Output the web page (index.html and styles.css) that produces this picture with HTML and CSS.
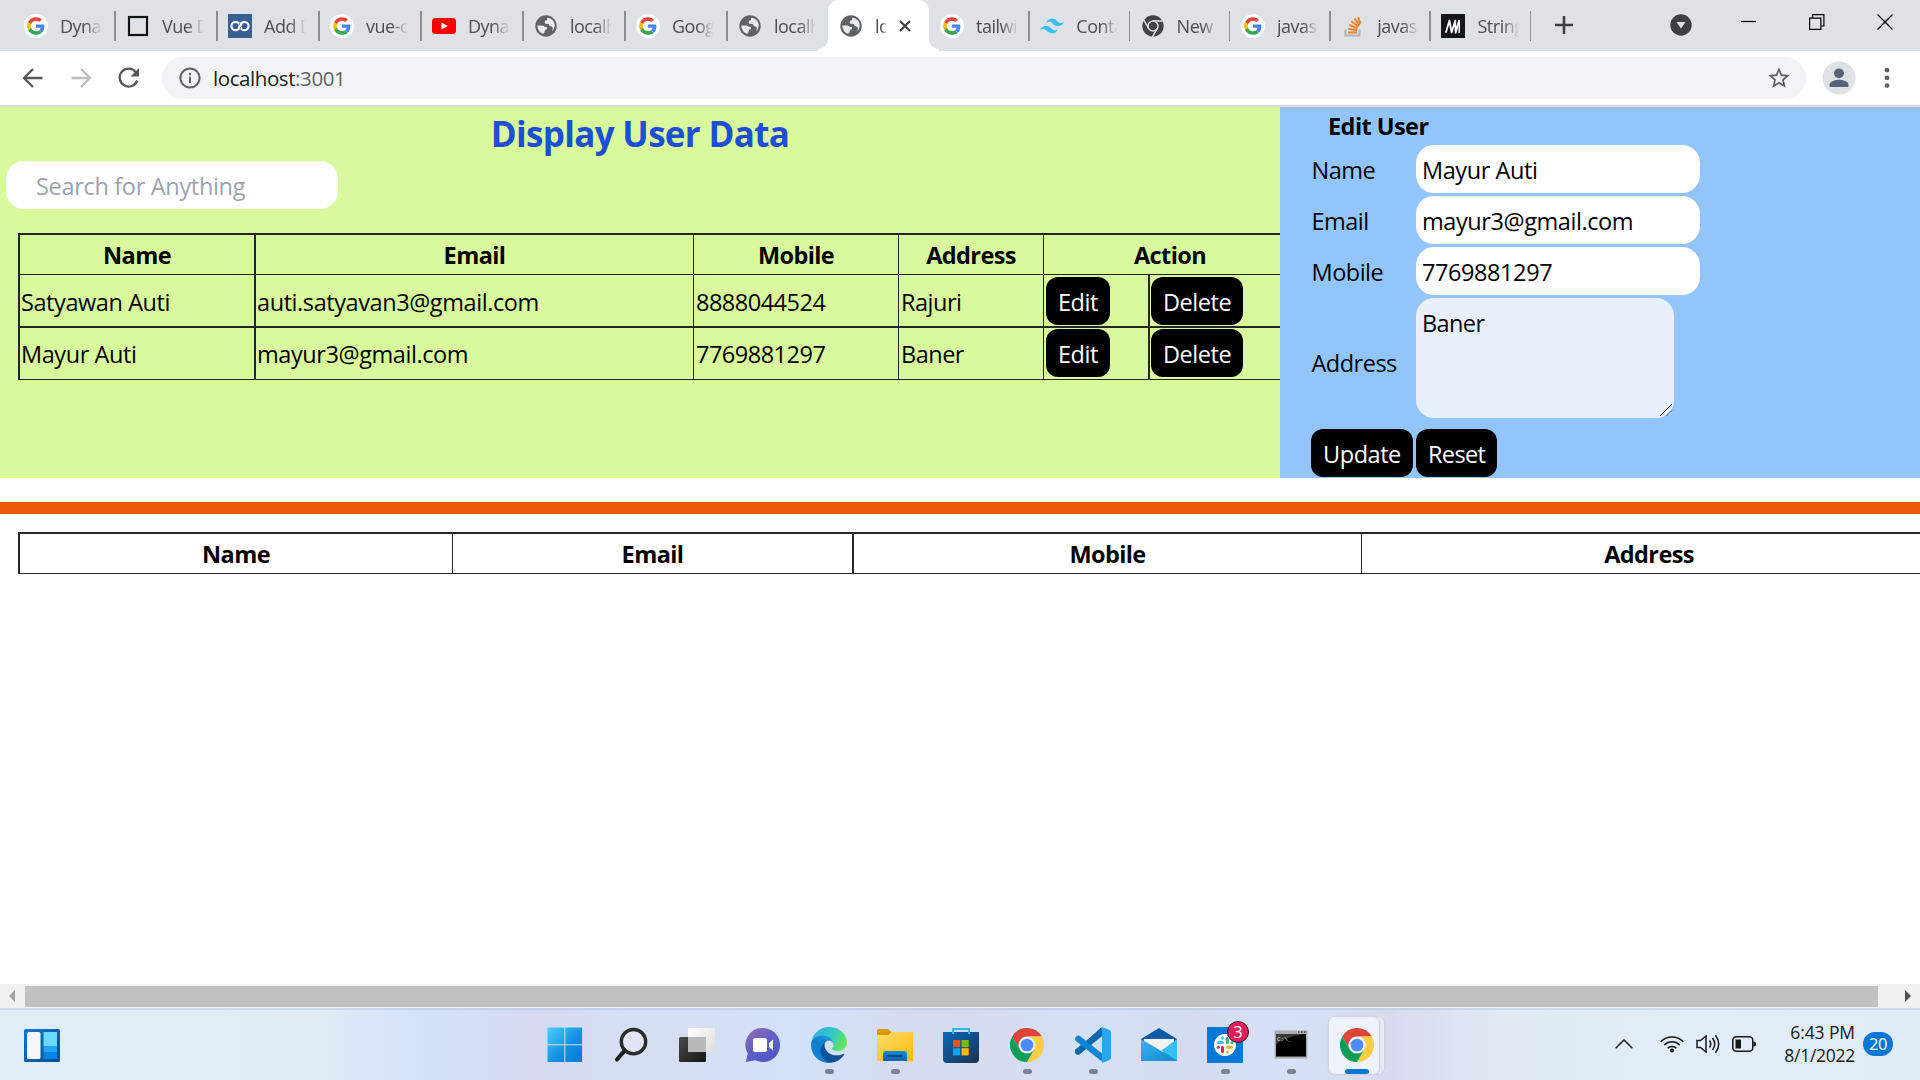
FILE: index.html
```html
<!DOCTYPE html>
<html lang="en">
<head>
<meta charset="utf-8">
<title>localhost:3001</title>
<link rel="stylesheet" href="styles.css">
</head>
<body>
<svg class="defs" aria-hidden="true">
  <defs>
    <linearGradient id="g-win" x1="0" y1="0" x2="1" y2="1"><stop offset="0" stop-color="#4bd0fd"/><stop offset=".55" stop-color="#1193e0"/><stop offset="1" stop-color="#0578d4"/></linearGradient>
    <linearGradient id="g-dark" x1="0" y1="0" x2="1" y2="1"><stop offset="0" stop-color="#4a4a4a"/><stop offset="1" stop-color="#151515"/></linearGradient>
    <linearGradient id="g-light" x1="0" y1="0" x2="1" y2="1"><stop offset="0" stop-color="#fff"/><stop offset="1" stop-color="#dcdcdc"/></linearGradient>
    <linearGradient id="g-chat" x1="0" y1="0" x2=".6" y2="1"><stop offset="0" stop-color="#9b69b0"/><stop offset=".6" stop-color="#5b5fc7"/><stop offset="1" stop-color="#5256c4"/></linearGradient>
    <linearGradient id="g-edge1" x1="0" y1="0" x2="1" y2="0"><stop offset="0" stop-color="#0c59a4"/><stop offset="1" stop-color="#114a8b"/></linearGradient>
    <linearGradient id="g-edge2" x1=".7" y1="0" x2=".2" y2="1"><stop offset="0" stop-color="#1b9de2"/><stop offset=".4" stop-color="#127ec9"/><stop offset="1" stop-color="#0486e0"/></linearGradient>
    <linearGradient id="g-edge3" x1="0" y1=".3" x2="1" y2=".7"><stop offset="0" stop-color="#2bb4ea"/><stop offset=".5" stop-color="#36c5c5"/><stop offset="1" stop-color="#66eb4c"/></linearGradient>
    <linearGradient id="g-fold" x1="0" y1="0" x2="1" y2="1"><stop offset="0" stop-color="#ffdc6b"/><stop offset="1" stop-color="#fbbb0a"/></linearGradient>
    <linearGradient id="g-tray" x1="0" y1="0" x2="0" y2="1"><stop offset="0" stop-color="#148ad8"/><stop offset="1" stop-color="#0561b4"/></linearGradient>
    <linearGradient id="g-store" x1="0" y1="0" x2="1" y2="1"><stop offset="0" stop-color="#0669bc"/><stop offset="1" stop-color="#21314e"/></linearGradient>
    <linearGradient id="g-mail" x1="0" y1="0" x2="1" y2="1"><stop offset="0" stop-color="#35b5ee"/><stop offset="1" stop-color="#1687d4"/></linearGradient>
    <linearGradient id="g-wid" x1="0" y1="0" x2="1" y2="1"><stop offset="0" stop-color="#0a78d0"/><stop offset="1" stop-color="#0c4c92"/></linearGradient>
  </defs>
  <symbol id="google" viewBox="0 0 72 72">
    <circle cx="36" cy="36" r="36" fill="#fff"/>
    <g transform="translate(9.5 9.5) scale(1.1)">
      <path fill="#EA4335" d="M24 9.5c3.54 0 6.71 1.22 9.21 3.6l6.85-6.85C35.9 2.38 30.47 0 24 0 14.62 0 6.51 5.38 2.56 13.22l7.98 6.19C12.43 13.72 17.74 9.5 24 9.5z"/>
      <path fill="#4285F4" d="M46.98 24.55c0-1.57-.15-3.09-.38-4.55H24v9.02h12.94c-.58 2.96-2.26 5.48-4.78 7.18l7.73 6c4.51-4.18 7.09-10.36 7.09-17.65z"/>
      <path fill="#FBBC05" d="M10.53 28.59c-.48-1.45-.76-2.99-.76-4.59s.27-3.14.76-4.59l-7.98-6.19C.92 16.46 0 20.12 0 24c0 3.88.92 7.54 2.56 10.78l7.97-6.19z"/>
      <path fill="#34A853" d="M24 48c6.48 0 11.93-2.13 15.89-5.81l-7.73-6c-2.15 1.45-4.92 2.3-8.16 2.3-6.26 0-11.57-4.22-13.47-9.91l-7.98 6.19C6.51 42.62 14.62 48 24 48z"/>
    </g>
  </symbol>
  <symbol id="globe" viewBox="0 0 24 24">
    <circle cx="12" cy="12" r="10.7" fill="#5f6368"/>
    <path d="M3.2 11.5h5.6q2.2 1.8 3.6 1.6 1.2.6.4 1.9-1.8.6-2 2-.2 2.800-2 2.800Q3.600 17.500 3.200 11.500z" fill="#e9ebee"/>
    <path d="M13.800 3.600q-1.600 1.200-.6 2.400l-2 .8q-1.400 2.200.2 3l3.400.2q.4 2.200 2.400 2.600 1.800.2 1.600 2.200l-.8 2.600q2.600-2 2.800-5.800Q20.400 5.400 13.800 3.600z" fill="#e9ebee"/>
  </symbol>
  <symbol id="chrome" viewBox="0 0 48 48">
    <path fill="#db4437" d="M3.200 12A24 24 0 0 1 44.800 12H24A12 12 0 0 0 13.600 30Z"/>
    <path fill="#ffcd40" d="M44.800 12A24 24 0 0 1 24 48L34.400 30A12 12 0 0 0 24 12Z"/>
    <path fill="#0f9d58" d="M24 48A24 24 0 0 1 3.200 12L13.600 30A12 12 0 0 0 34.400 30Z"/>
    <circle cx="24" cy="24" r="11.300" fill="#f1f1f1"/><circle cx="24" cy="24" r="8.900" fill="#4c8bf5"/>
  </symbol>
</svg>

<div class="screen">
  <header class="tabstrip">
    <div class="tab"><svg class="fav"><use href="#google"/></svg><span class="tt">Dyna</span></div>
    <div class="tab"><svg class="fav" viewBox="0 0 24 24"><rect x="3" y="3" width="18" height="18" fill="none" stroke="#111" stroke-width="2.200"/></svg><span class="tt">Vue D</span></div>
    <div class="tab"><svg class="fav" viewBox="0 0 24 24"><path fill="#365f93" d="M0 0h24v24H0z"/><g fill="none" stroke="#fff" stroke-width="2.200"><circle cx="7.600" cy="12" r="4.200"/><circle cx="16.400" cy="12" r="4.200"/></g><path d="M11 9.500h2v5h-2z" fill="#365f93"/><path d="M10.300 14.800l3.400-5.600" stroke="#fff" stroke-width="2.200"/></svg><span class="tt">Add D</span></div>
    <div class="tab"><svg class="fav"><use href="#google"/></svg><span class="tt">vue-c</span></div>
    <div class="tab"><svg class="fav" viewBox="0 0 24 24"><rect y="4" width="24" height="16" rx="3.500" fill="#f00"/><path d="M9.500 8.400v7.200l6.300-3.600z" fill="#fff"/></svg><span class="tt">Dyna</span></div>
    <div class="tab"><svg class="fav"><use href="#globe"/></svg><span class="tt">localh</span></div>
    <div class="tab"><svg class="fav"><use href="#google"/></svg><span class="tt">Goog</span></div>
    <div class="tab nosep"><svg class="fav"><use href="#globe"/></svg><span class="tt">localh</span></div>
    <div class="tab active"><svg class="fav"><use href="#globe"/></svg><span class="tt">lo</span><svg class="close" viewBox="0 0 12 12"><path d="M1 1l10 10M11 1L1 11" stroke="#3c4043" stroke-width="2"/></svg></div>
    <div class="tab slim"><svg class="fav"><use href="#google"/></svg><span class="tt">tailwi</span></div>
    <div class="tab slim"><svg class="fav" viewBox="0 0 24 24"><path fill="#38bdf8" d="M12 4.800c-3.200 0-5.200 1.600-6 4.800 1.200-1.600 2.600-2.200 4.200-1.800.913.228 1.565.89 2.288 1.624C13.666 10.618 15.027 12 18 12c3.200 0 5.200-1.600 6-4.800-1.200 1.600-2.600 2.200-4.200 1.800-.913-.228-1.565-.89-2.288-1.624C16.337 6.182 14.976 4.800 12 4.800zM6 12c-3.200 0-5.200 1.600-6 4.800 1.200-1.600 2.600-2.200 4.200-1.800.913.228 1.565.89 2.288 1.624C7.666 17.818 9.027 19.200 12 19.200c3.200 0 5.200-1.600 6-4.800-1.200 1.600-2.600 2.200-4.200 1.800-.913-.228-1.565-.89-2.288-1.624C10.337 13.382 8.976 12 6 12z"/></svg><span class="tt">Conta</span></div>
    <div class="tab slim"><svg class="fav" viewBox="0 0 24 24"><circle cx="12" cy="12" r="10.700" fill="#3f4247"/><g fill="none" stroke="#dee1e6" stroke-width="1.500"><circle cx="12" cy="12" r="5"/><path d="M12 7h10M7.700 14.500l-5-8.700M16.300 14.500l-5 8.700"/></g></svg><span class="tt">New</span></div>
    <div class="tab slim"><svg class="fav"><use href="#google"/></svg><span class="tt">javas</span></div>
    <div class="tab slim"><svg class="fav" viewBox="0 0 24 24"><path d="M4.500 15.500v6h14v-6" fill="none" stroke="#b4b6b9" stroke-width="2"/><g stroke="#f48024" stroke-width="2"><path d="M7 18.500h9M7.200 14.700l8.900 1.600M8.200 10.800l8.200 3.500M10.300 7.200l7 5.500M13.500 4.600l5 6.600M17 3.200l2.600 6.500"/></g></svg><span class="tt">javas</span></div>
    <div class="tab slim"><svg class="fav" viewBox="0 0 24 24"><path fill="#15141a" d="M0 0h24v24H0z"/><path d="M4.800 18.800L8.400 6.500l2.200 12L14.200 6.500l.4 12.300 3.600-12.600" fill="none" stroke="#fff" stroke-width="1.800" stroke-linejoin="round"/><path d="M18.200 6v12.800" stroke="#fff" stroke-width="1.500"/></svg><span class="tt">String</span></div>
    <svg class="plus" viewBox="0 0 18 18"><path d="M9 0v18M0 9h18" stroke="#3c4043" stroke-width="2.600"/></svg>
    <svg class="dropdown" viewBox="0 0 22 22"><circle cx="11" cy="11" r="10.700" fill="#3c4043"/><path d="M6.500 8h9L11 14.500z" fill="#dee1e6"/></svg>
    <div class="winctl">
      <svg viewBox="0 0 16 16"><path d="M0 7.500h15" stroke="#000" stroke-width="1.200"/></svg>
      <svg viewBox="0 0 16 16"><path d="M.6 4.100h11.300v11.300H.6zM3.600 4V.7h11.300V12H12" fill="none" stroke="#000" stroke-width="1.200"/></svg>
      <svg viewBox="0 0 16 16"><path d="M.5.500l15 15M15.500.500l-15 15" stroke="#000" stroke-width="1.200"/></svg>
    </div>
  </header>

  <div class="toolbar">
    <svg class="nav" viewBox="0 0 22 22"><path d="M20.500 11H2.500M11 2L2 11l9 9" fill="none" stroke="#54585d" stroke-width="2.300"/></svg>
    <svg class="nav" viewBox="0 0 22 22"><path d="M1.500 11h18M11 2l9 9-9 9" fill="none" stroke="#babcbe" stroke-width="2.300"/></svg>
    <svg class="nav" viewBox="0 0 22 22"><path d="M19.200 13.500A9 9 0 1 1 17.800 5" fill="none" stroke="#54585d" stroke-width="2.300"/><path d="M21 1v8.500h-8.500z" fill="#54585d"/></svg>
    <div class="omnibox">
      <svg class="info" viewBox="0 0 22 22"><circle cx="11" cy="11" r="9.600" fill="none" stroke="#5f6368" stroke-width="2"/><path d="M11 9.800v6.200M11 6v2.200" stroke="#5f6368" stroke-width="2"/></svg>
      <span class="url">localhost<i>:3001</i></span>
      <svg class="star" viewBox="0 0 24 24"><path d="M22 9.240l-7.190-.62L12 2 9.190 8.630 2 9.240l5.460 4.730L5.820 21 12 17.270 18.180 21l-1.630-7.030L22 9.240zM12 15.400l-3.760 2.270 1-4.280-3.320-2.880 4.380-.38L12 6.100l1.710 4.040 4.380.38-3.320 2.880 1 4.280L12 15.400z" fill="#5f6368"/></svg>
    </div>
    <svg class="avatar" viewBox="0 0 34 34"><circle cx="17" cy="17" r="16.500" fill="#dee1e6"/><circle cx="17" cy="12.300" r="4.900" fill="#56637a"/><path d="M7.500 26v-2.300c0-3.300 6-5 9.500-5s9.500 1.700 9.500 5V26z" fill="#56637a"/></svg>
    <svg class="dots" viewBox="0 0 6 22"><g fill="#5f6368"><circle cx="3" cy="3.200" r="2.400"/><circle cx="3" cy="10.900" r="2.400"/><circle cx="3" cy="18.600" r="2.400"/></g></svg>
  </div>

  <main class="page">
    <div class="panels">
      <section class="users">
        <h1>Display User Data</h1>
        <div class="search">Search for Anything</div>
        <div class="grid users-grid">
          <div class="th w2">Name</div><div class="th">Email</div><div class="th">Mobile</div><div class="th">Address</div><div class="th action">Action</div>
          <div class="td w2">Satyawan Auti</div><div class="td">auti.satyavan3@gmail.com</div><div class="td num">8888044524</div><div class="td num">Rajuri</div><div class="td w2 btncell"><button>Edit</button></div><div class="td btncell"><button>Delete</button></div>
          <div class="td w2 last">Mayur Auti</div><div class="td last">mayur3@gmail.com</div><div class="td num last">7769881297</div><div class="td num last">Baner</div><div class="td w2 last btncell"><button>Edit</button></div><div class="td last btncell"><button>Delete</button></div>
        </div>
      </section>
      <section class="edit">
        <h2>Edit User</h2>
        <div class="form">
          <label>Name</label><div class="input">Mayur Auti</div>
          <label>Email</label><div class="input">mayur3@gmail.com</div>
          <label>Mobile</label><div class="input">7769881297</div>
          <label class="addr">Address</label>
          <div class="area">Baner<svg class="grip" viewBox="0 0 14 14"><path d="M1 13L13 1M7.500 13L13 7.500" stroke="#444" stroke-width="1"/><path d="M2.200 13.200L13.200 2.200M8.700 13.200l4.500-4.500" stroke="#fff" stroke-width=".8"/></svg></div>
        </div>
        <div class="actions"><button>Update</button><button class="reset">Reset</button></div>
      </section>
    </div>
    <div class="divider"></div>
    <div class="grid result-grid">
      <div class="th">Name</div><div class="th w2">Email</div><div class="th">Mobile</div><div class="th">Address</div>
    </div>
  </main>

  <div class="hscroll">
    <svg class="arrow" viewBox="0 0 6 12"><path d="M6 0v12L0 6z" fill="#a3a3a3"/></svg>
    <div class="thumb"></div>
    <svg class="arrow" viewBox="0 0 6 12"><path d="M0 0v12l6-6z" fill="#505050"/></svg>
  </div>

  <footer class="taskbar">
    <svg class="widgets" viewBox="0 0 36 33"><rect width="36" height="33" rx="1.500" fill="url(#g-wid)"/><rect x="3" y="3" width="13.500" height="27" rx="1.500" fill="#f6f6f6"/><path d="M19.500 3H33v14.500H19.500z" fill="#68d9ff"/><path d="M19.500 17.500H33v6H19.500z" fill="#1ea4fa"/><path d="M19.500 23.500H33V30H19.500z" fill="#0585ec"/></svg>
    <nav class="apps">
      <div class="app"><svg viewBox="0 0 36 36"><g fill="url(#g-win)"><path d="M.5.500h16.800v16.800H.5zM18.300.500h16.800v16.800H18.300zM.5 18.300h16.800v16.800H.5zM18.300 18.300h16.800v16.800H18.300z"/></g></svg></div>
      <div class="app"><svg viewBox="0 0 36 36"><circle cx="20.500" cy="14.700" r="12.200" fill="#e1e5f5" stroke="#2b2b2b" stroke-width="3.400"/><path d="M11.700 23.500L4 32.500" stroke="#1f1f1f" stroke-width="4.200" stroke-linecap="round"/></svg></div>
      <div class="app"><svg viewBox="0 0 36 36"><rect y="10" width="27" height="25" rx="1.500" fill="url(#g-dark)"/><rect x="9" y="1" width="27" height="24" rx="1" fill="url(#g-light)"/><path d="M9 10h18v15H9z" fill="#b9b9b9"/></svg></div>
      <div class="app"><svg viewBox="0 0 36 36"><path d="M18 1a17 17 0 1 1-7.500 32.200L.8 35l1.900-8.500A17 17 0 0 1 18 1z" fill="url(#g-chat)"/><rect x="8" y="11" width="14" height="14" rx="2" fill="#fff"/><path d="M24 16l4-3.600v11.200L24 20z" fill="#fff"/></svg></div>
      <div class="app run"><svg viewBox="0 0 256 256"><path fill="url(#g-edge1)" d="M231 190.500c-3.400 1.800-6.900 3.400-10.500 4.700a101.900 101.900 0 0 1-35.900 6.500c-47.300 0-88.500-32.500-88.500-74.300a31.500 31.500 0 0 1 16.400-27.300c-42.800 1.800-53.800 46.400-53.800 72.500 0 74 68.100 81.400 82.800 81.400 7.900 0 19.800-2.300 27-4.600l1.300-.4a128.300 128.300 0 0 0 66.600-52.800 4 4 0 0 0-5.400-5.700z"/><path fill="url(#g-edge2)" d="M105.700 241.400a79.200 79.200 0 0 1-22.700-21.300 80.700 80.700 0 0 1 29.500-120c3.200-1.500 8.500-4.100 15.600-4a32.400 32.400 0 0 1 25.700 13 31.900 31.900 0 0 1 6.300 18.700c0-.2 24.500-79.600-80-79.600-43.900 0-80 41.600-80 78.200a130.200 130.200 0 0 0 12.100 56 128 128 0 0 0 156.400 67 75.500 75.500 0 0 1-62.800-8z"/><path fill="url(#g-edge3)" d="M152.300 148.900c-.9 1-3.400 2.500-3.400 5.600 0 2.600 1.700 5.200 4.800 7.300 14.300 10 41.400 8.600 41.500 8.600a59.600 59.600 0 0 0 30.300-8.300 61.400 61.400 0 0 0 30.400-52.900c.3-22.400-8-37.300-11.300-43.900C223.500 23.900 177.700 0 128 0A128 128 0 0 0 0 126.200c.5-36.500 36.800-66 80-66 3.500 0 23.500.3 42 10a72.600 72.600 0 0 1 30.900 29.300c6.100 10.600 7.200 24.100 7.200 29.500s-2.700 13.300-7.800 19.900z"/></svg></div>
      <div class="app run"><svg viewBox="0 0 36 36"><path d="M0 3.500Q0 2 1.500 2H11l4 3.500-3 3H0z" fill="#dd9a06"/><path d="M0 8h11.500l3-3H36v29H0z" fill="url(#g-fold)"/><path d="M6 34V27q0-3 3-3h18q3 0 3 3v7z" fill="url(#g-tray)"/><path d="M10.500 29h14.500" stroke="#0a4583" stroke-width="1.800" stroke-linecap="round"/></svg></div>
      <div class="app"><svg viewBox="0 0 36 36"><path d="M10 8V2h16v6" fill="none" stroke="#26bcf5" stroke-width="2"/><path d="M0 5h36v27q0 4-4 4H4q-4 0-4-4z" fill="url(#g-store)"/><path d="M10 7V5M26 7V5" stroke="#26bcf5" stroke-width="2"/><path d="M10 13h7.200v7.200H10z" fill="#f25022"/><path d="M18.500 13h7.200v7.200h-7.200z" fill="#7fba00"/><path d="M10 21.200h7.200v7.200H10z" fill="#00a4ef"/><path d="M18.500 21.200h7.200v7.200h-7.200z" fill="#ffb900"/></svg></div>
      <div class="app run"><svg class="s34"><use href="#chrome"/></svg></div>
      <div class="app run"><svg viewBox="0 0 36 36"><path d="M27 5L3 24.500" stroke="#0869b0" stroke-width="6.500" stroke-linecap="round"/><path d="M3.500 12L27 30.500" stroke="#0e84d2" stroke-width="6.500" stroke-linecap="round"/><path d="M14 18L26.500 8V0L12 13.500z" fill="#0869b0"/><path d="M27 0l7.500 3q1.500.8 1.500 2v26q0 1.200-1.500 2L27 36z" fill="#26a5f3"/></svg></div>
      <div class="app"><svg viewBox="0 0 36 36"><path d="M0 12L18 1l18 11v6H0z" fill="#0a5ba8"/><path d="M3 12h30v13H3z" fill="#f4f4f4"/><path d="M0 12l22 13 14-12v21H0z" fill="url(#g-mail)"/><path d="M36 12L20.500 23.500 36 33.500z" fill="#35c0f4"/></svg></div>
      <div class="app run"><svg viewBox="0 0 36 36"><path d="M0 0h36v36H0z" fill="#0078d7"/><circle cx="18" cy="18" r="11" fill="#fff"/><g stroke-width="3" stroke-linecap="round"><path d="M11.500 15.500h4M15.500 11v.1" stroke="#36c5f0"/><path d="M20.300 11.500v4M25 15.500h-.1" stroke="#2eb67d"/><path d="M24.500 20.300h-4M20.300 25v-.1" stroke="#ecb22e"/><path d="M15.500 24.500v-4M11.200 20.300h.1" stroke="#e01e5a"/></g></svg><span class="badge">3</span></div>
      <div class="app run"><svg viewBox="0 0 36 36"><rect x="1.500" y="3.500" width="33" height="28" fill="#a9abae"/><path d="M3 7h30v22.500H3z" fill="#000"/><path d="M3 7h30c-12 1-24 5-30 11z" fill="#3a3a3a"/><text x="4" y="13.500" class="prompt">C:\_</text><path d="M25 5h1.500m1.500 0h1.500m1.500 0h1.500" stroke="#444" stroke-width="1.400"/></svg></div>
      <div class="app current"><svg class="s34"><use href="#chrome"/></svg></div>
    </nav>
    <div class="tray">
      <svg class="chev" viewBox="0 0 18 10"><path d="M.7 9.300L9 1l8.300 8.300" fill="none" stroke="#1a1a1a" stroke-width="1.500"/></svg>
      <svg class="wifi" viewBox="0 0 24 18"><g fill="none" stroke="#1a1a1a" stroke-width="1.600"><path d="M.8 6.700a15.800 15.800 0 0 1 22.400 0M4.200 10a11 11 0 0 1 15.600 0M7.600 13.300a6.300 6.300 0 0 1 8.800 0"/></g><circle cx="12" cy="15.600" r="2" fill="#1a1a1a"/></svg>
      <svg class="vol" viewBox="0 0 24 20"><g fill="none" stroke="#1a1a1a" stroke-width="1.500"><path d="M1 6.500h3.500L10 2v16l-5.500-4.500H1zM13.500 6.500q2.500 3.500 0 7M16.500 4q4.500 6 0 12M19.500 1.200q6.500 8.800 0 17.600"/></g></svg>
      <svg class="batt" viewBox="0 0 24 16"><rect x=".8" y=".8" width="20" height="14.400" rx="3.500" fill="none" stroke="#1a1a1a" stroke-width="1.600"/><path d="M3.500 3.500h5.500v9H3.500z" fill="#1a1a1a"/><path d="M21.500 5.500q2.500 0 2.500 2.500t-2.500 2.500z" fill="#1a1a1a"/></svg>
      <div class="clock"><span class="time">6:43 PM</span><span>8/1/2022</span></div>
      <div class="count">20</div>
    </div>
  </footer>
</div>
</body>
</html>
```
FILE: styles.css
```css
* { box-sizing: border-box; }
body { margin: 0; overflow: hidden; background: #fff; color: #000; font-family: "Open Sans", "Noto Sans", sans-serif; }
svg { display: block; flex: none; }
.defs { position: absolute; width: 0; height: 0; }
.screen { width: 1920px; height: 1080px; display: flex; flex-direction: column; }

/* browser chrome */
.tabstrip { height: 51px; flex: none; background: #dee1e6; display: flex; align-items: flex-start; padding-left: 13px; }
.tab { width: 102px; height: 51px; padding: 1px 0 0 11px; display: flex; align-items: center; gap: 12px; position: relative; flex: none; }
.tab.slim { width: 100.300px; }
.tab::after { content: ""; position: absolute; right: -.5px; top: 11px; width: 1.500px; height: 30px; background: #8b8e93; }
.tab.nosep::after { display: none; }
.fav { width: 24px; height: 24px; }
.tt { width: 42px; white-space: nowrap; font-size: 18px; letter-spacing: -.5px; line-height: 26px; color: #4b4e53; -webkit-mask-image: linear-gradient(90deg, #000 60%, transparent); mask-image: linear-gradient(90deg, #000 60%, transparent); }
.tab.active { width: 101px; margin-left: -1px; background: #fff; border-radius: 11px 11px 0 0; color: #3c4043; }
.tab.active::before { content: ""; position: absolute; left: -10px; bottom: 0; width: 10px; height: 12px; background: radial-gradient(circle at 0 0, transparent 9.500px, #fff 10.500px); }
.tab.active::after { top: auto; bottom: 0; right: -10px; width: 10px; height: 12px; background: radial-gradient(circle at 100% 0, transparent 9.500px, #fff 10.500px); }
.tab.active .tt { width: 12px; }
.close { width: 12px; height: 12px; }
.plus { width: 18px; height: 18px; margin: 16px 0 0 24.500px; }
.dropdown { width: 22px; height: 22px; margin: 14px 0 0 97px; }
.winctl { display: flex; gap: 52px; margin: 14px 0 0 49px; }
.winctl svg { width: 16px; height: 16px; }

.toolbar { height: 56px; flex: none; display: flex; align-items: center; border-bottom: 2px solid #dadce0; padding-left: 22px; }
.nav { width: 22px; height: 22px; margin-right: 26px; }
.omnibox { width: 1644px; height: 42px; margin-left: -4px; border-radius: 21px; background: #f1f3f4; display: flex; align-items: center; padding: 0 14px 0 17px; }
.info { width: 22px; height: 22px; }
.url { flex: 1; margin-left: 12px; font-size: 20.500px; letter-spacing: -.42px; color: #202124; }
.url i { font-style: normal; color: #5f6368; }
.star { width: 26px; height: 26px; }
.avatar { width: 34px; height: 34px; margin-left: 16px; }
.dots { width: 6px; height: 22px; margin-left: 28px; }

/* page */
.page { height: 877px; flex: none; overflow: hidden; font-size: 23.500px; letter-spacing: -.42px; line-height: 36px; }
.panels { display: flex; height: 371px; }
.users { width: 1280px; background: #d9f99d; overflow: hidden; }
h1 { margin: 0; height: 54px; font-size: 35px; line-height: 53px; letter-spacing: -.68px; font-weight: 700; text-align: center; color: #1d4ed8; }
.search { width: 332px; height: 48px; margin-left: 6px; padding: 7px 0 0 30px; border-radius: 18px; background: #fff; color: #9ca3af; letter-spacing: -.32px; }
.grid { display: grid; border-top: 2px solid #262626; border-left: 2px solid #262626; margin-left: 18px; }
.users-grid { width: 1279px; margin-top: 24px; grid-template-columns: 236px 438px 205px 145px 106px 147px; grid-template-rows: 40px 53px 52px; }
.result-grid { width: 1919px; margin-top: 18px; grid-template-columns: 433px 401px 508px 575px; grid-template-rows: 40px; }
.th, .td { border-right: 1px solid #262626; border-bottom: 1px solid #262626; }
.th { font-weight: 700; text-align: center; letter-spacing: -.6px; line-height: 38px; padding-top: 1px; }
.td { border-bottom-width: 2px; padding: 9px 0 0 1px; }
.td.num { padding-left: 2px; letter-spacing: -.5px; }
.td.last { border-bottom-width: 1px; padding-top: 8px; }
.w2 { border-right-width: 2px; }
.action { grid-column: span 2; }
.td.btncell { padding: 2px 0 0 2px; }
.td.last.btncell { padding-top: 1px; }
.td.btncell:not(.w2) { padding-left: 1px; }
button { height: 48px; margin: 0; border: 0; border-radius: 12px; padding: 1px 12px 0; background: #000; color: #fff; font: inherit; letter-spacing: -.44px; display: block; }
.reset { letter-spacing: -.6px; }

.edit { flex: 1; background: #93c5fd; padding-left: 31px; }
h2 { margin: 0 0 0 17px; height: 38px; line-height: 39px; font-size: 23.500px; letter-spacing: -.55px; font-weight: 700; }
.form { display: grid; grid-template-columns: 105px 284px; grid-template-rows: 48px 48px 48px 120px; row-gap: 3px; }
.form label { padding: 7px 0 0 .5px; letter-spacing: -.5px; }
.form .addr { padding-top: 47px; }
.input, .area { background: #fff; border-radius: 18px; padding: 7px 0 0 6px; }
.area { position: relative; width: 258px; background: #e8f0fe; letter-spacing: -.6px; }
.grip { position: absolute; right: 1px; bottom: 1px; width: 14px; height: 14px; }
.actions { display: flex; gap: 3px; margin-top: 11px; }
.divider { height: 12px; margin-top: 24px; background: #ea580c; }

.hscroll { height: 24px; flex: none; background: #f1f1f1; display: flex; align-items: center; padding: 0 9px; }
.arrow { width: 6px; height: 12px; }
.thumb { width: 1853px; height: 21px; margin: 0 27px 0 10px; background: #c1c1c1; }

/* taskbar */
.taskbar { height: 72px; flex: none; display: flex; align-items: flex-start; border-top: 2px solid rgba(150, 170, 205, .25); background: linear-gradient(90deg, #e0edf6 0, #e0ebf6 320px, #d2e1fa 430px, #d7daf1 540px, #d5dff4 620px, #d6def3 680px, #d2e2f9 790px, #d7dbef 920px, #d5dff4 1090px, #d5dcf1 1200px, #d4e1f7 1290px, #d8dbee 1390px, #e0e9f5 1500px, #e1edf8 1700px, #e0ebf8 1920px); }
.widgets { width: 36px; height: 33px; margin: 19px 0 0 24px; }
.apps { display: flex; margin-left: 472px; }
.app { width: 66px; height: 70px; position: relative; display: flex; justify-content: center; padding-top: 17px; }
.app svg { width: 36px; height: 36px; }
.app .s34 { width: 34px; height: 34px; margin-top: 1px; position: relative; }
.run::after, .current::after { content: ""; position: absolute; bottom: 6px; left: 29px; width: 9px; height: 5px; border-radius: 3px; background: #7c828f; }
.current::after { left: 21px; width: 24px; background: #0078d4; }
.current::before { content: ""; position: absolute; left: 5px; top: 7px; width: 50px; height: 57px; border-radius: 6px; background: rgba(244, 247, 252, .8); box-shadow: 0 0 0 1.500px #cfd5e6, 5px 0 0 0 #e7ebf6, 6px 0 0 .5px #ccd2e2; }
.badge { position: absolute; right: 9px; top: 11px; width: 22px; height: 22px; border-radius: 50%; border: 1.500px solid #4a0a22; background: #e01e5a; color: #fff; font-size: 16.500px; line-height: 19px; text-align: center; }
.prompt { font: 6px "Liberation Mono", monospace; fill: #ddd; }
.tray { flex: 1; height: 70px; display: flex; align-items: center; margin-left: 225px; padding-bottom: 2px; color: #1a1a1a; }
.chev { width: 18px; height: 10px; }
.wifi { width: 24px; height: 18px; margin-left: 27px; }
.vol { width: 24px; height: 20px; margin-left: 12px; }
.batt { width: 24px; height: 16px; margin-left: 12px; }
.clock { width: 99px; display: flex; flex-direction: column; align-items: flex-end; font-size: 17.500px; letter-spacing: -.28px; line-height: 23px; padding-bottom: 1px; }
.time { letter-spacing: -.1px; }
.count { width: 30px; height: 24px; margin-left: 8px; border-radius: 12px; background: #0078d4; color: #fff; font-size: 16.500px; line-height: 23px; text-align: center; letter-spacing: -.4px; }
```
